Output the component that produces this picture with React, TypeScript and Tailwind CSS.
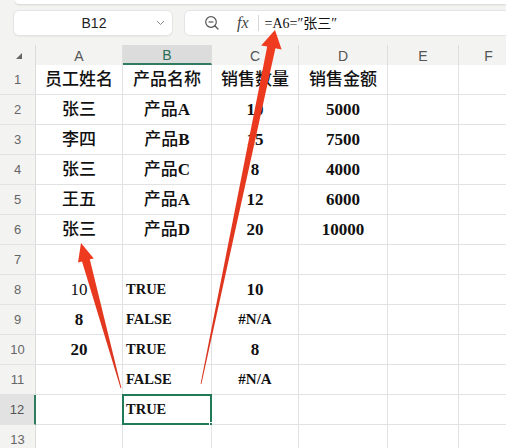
import React from "react";

const COLS = [
  { key: "A", w: "w-[87px]" },
  { key: "B", w: "w-[89px]" },
  { key: "C", w: "w-[87px]" },
  { key: "D", w: "w-[89px]" },
  { key: "E", w: "w-[71px]" },
  { key: "F", w: "w-[60px]" },
];

type Cell = { t: string; align?: "c" | "l"; size?: string; weight?: string };

const H = (t: string): Cell => ({ t, align: "c" });
const N = (t: string): Cell => ({ t, align: "c" });
const L = (t: string): Cell => ({ t, align: "l", size: "text-[14.5px]" });
const E: Cell = { t: "" };

const ROWS: Cell[][] = [
  [H("员工姓名"), H("产品名称"), H("销售数量"), H("销售金额"), E, E],
  [H("张三"), H("产品A"), N("10"), N("5000"), E, E],
  [H("李四"), H("产品B"), N("15"), N("7500"), E, E],
  [H("张三"), H("产品C"), N("8"), N("4000"), E, E],
  [H("王五"), H("产品A"), N("12"), N("6000"), E, E],
  [H("张三"), H("产品D"), N("20"), N("10000"), E, E],
  [E, E, E, E, E, E],
  [{ t: "10", align: "c", weight: "font-normal" }, L("TRUE"), N("10"), E, E, E],
  [N("8"), L("FALSE"), { t: "#N/A", align: "c", size: "text-[15px]" }, E, E, E],
  [N("20"), L("TRUE"), N("8"), E, E, E],
  [E, L("FALSE"), { t: "#N/A", align: "c", size: "text-[15px]" }, E, E, E],
  [E, L("TRUE"), E, E, E, E],
  [E, E, E, E, E, E],
];

const cellFont = {
  fontFamily: "'Liberation Serif','Noto Sans CJK SC',serif",
};

function Text({ t }: { t: string }) {
  const parts = t.match(/[\u4e00-\u9fff]+|[^\u4e00-\u9fff]+/g) ?? [];
  return (
    <>
      {parts.map((p, i) =>
        /[\u4e00-\u9fff]/.test(p) ? (
          <span key={i} className="font-medium">
            {p}
          </span>
        ) : (
          <span key={i}>{p}</span>
        )
      )}
    </>
  );
}

export default function App() {
  return (
    <div className="relative w-[506px] h-[448px] overflow-hidden bg-[#f3f3f2]">
      {/* toolbar */}
      <div className="h-[45px] flex flex-col">
        <div className="h-[4px] ml-[15px] bg-white rounded-bl-lg shadow-[0_1px_2px_rgba(0,0,0,0.12)]" />
        <div className="flex mt-[6px] h-[26px]">
          <div className="ml-[13px] w-[160px] bg-white rounded-md border border-[#e4e4e4] shadow-[0_1px_1px_rgba(0,0,0,0.04)] flex items-center relative">
            <span
              className="flex-1 text-center text-[14px] text-[#222] pl-[2px]"
              style={{ fontFamily: "'Liberation Sans',Arial,sans-serif" }}
            >
              B12
            </span>
            <svg className="absolute right-[7px] top-[9px]" width="9" height="6" viewBox="0 0 9 6">
              <path d="M1 1 L4.5 4.5 L8 1" fill="none" stroke="#888" strokeWidth="1" />
            </svg>
          </div>
          <div className="ml-[11px] flex-1 -mr-[12px] bg-white rounded-md border border-[#e4e4e4] flex items-center">
            <svg className="ml-[19px]" width="16" height="16" viewBox="0 0 16 16">
              <circle cx="7" cy="7" r="5.3" fill="none" stroke="#555" strokeWidth="1.2" />
              <path d="M4.6 7 H9.4" stroke="#555" strokeWidth="1.2" />
              <path d="M10.8 10.8 L14 14" stroke="#555" strokeWidth="1.3" strokeLinecap="round" />
            </svg>
            <span
              className="ml-[17px] text-[16px] italic text-[#444]"
              style={{ fontFamily: "'Liberation Serif','DejaVu Serif',serif" }}
            >
              fx
            </span>
            <div className="ml-[9px] w-px h-[16px] bg-[#d6d6d6]" />
            <span
              className="ml-[6px] text-[14px] text-[#111]"
              style={{ fontFamily: "'Liberation Serif','Noto Sans CJK SC',serif" }}
            >
              =A6=″张三″
            </span>
          </div>
        </div>
      </div>

      {/* column header */}
      <div className="flex h-[20px]">
        <div className="w-[36px] shrink-0 flex items-center justify-center border-r border-[#dcdcdc]">
          <svg width="8" height="8" viewBox="0 0 8 8" className="ml-[2px] mt-[2px]">
            <path d="M7 1 L7 7 L1 7 Z" fill="#666" />
          </svg>
        </div>
        {COLS.map((c) => (
          <div
            key={c.key}
            className={`${c.w} shrink-0 flex items-center justify-center pt-[2px] text-[14px] border-r border-[#dedede] ${
              c.key === "B"
                ? "bg-[#dcdcdc] text-[#2a6e55] border-b-2 border-b-[#2f7d5e]"
                : "text-[#555]"
            }`}
            style={{ fontFamily: "'Liberation Sans',Arial,sans-serif" }}
          >
            {c.key}
          </div>
        ))}
      </div>

      {/* rows */}
      {ROWS.map((row, ri) => {
        const rn = ri + 1;
        const sel = rn === 12;
        return (
          <div key={ri} className="flex h-[30px]">
            <div
              className={`w-[36px] shrink-0 flex items-center justify-center pt-[1px] text-[13px] border-b border-[#e2e2e2] ${
                sel
                  ? "bg-[#e2e2e2] text-[#555] border-r-2 border-r-[#2f7d5e]"
                  : "text-[#666] border-r border-r-[#dcdcdc]"
              }`}
              style={{ fontFamily: "'Liberation Sans',Arial,sans-serif" }}
            >
              {rn}
            </div>
            {COLS.map((c, ci) => {
              const cell = row[ci];
              const isSel = sel && c.key === "B";
              return (
                <div
                  key={c.key}
                  className={`${c.w} shrink-0 relative bg-white border-r border-b border-[#e2e2e2] flex items-center ${
                    cell.align === "l" ? "justify-start pl-[3px]" : "justify-center"
                  } ${cell.size ?? "text-[17px]"} ${cell.weight ?? "font-bold"} text-[#111] whitespace-nowrap`}
                  style={cellFont}
                >
                  <Text t={cell.t} />
                  {isSel && (
                    <div className="absolute left-[-1px] top-[-1px] w-[90px] h-[31px] border-2 border-[#217a56] pointer-events-none">
                      <div className="absolute right-[-4px] bottom-[-4px] w-[5px] h-[5px] bg-[#217a56] border border-white" />
                    </div>
                  )}
                </div>
              );
            })}
          </div>
        );
      })}

      {/* arrows */}
      <svg className="absolute left-0 top-0 pointer-events-none" width="506" height="448" viewBox="0 0 506 448">
        <defs>
          <linearGradient id="g1" x1="0" y1="0" x2="0" y2="1">
            <stop offset="0" stopColor="#f03b1f" />
            <stop offset="1" stopColor="#d8351f" />
          </linearGradient>
        </defs>
        <polygon
          points="275,30 281.6,49.6 275.4,48.2 201.4,384 200.6,383.8 267.2,46.6 261.2,45.4"
          fill="url(#g1)"
        />
        <polygon
          points="81,243 93.8,258.4 89.8,259.2 121.4,388 120.6,388.2 82,261.4 78,262.6"
          fill="url(#g1)"
        />
      </svg>
    </div>
  );
}
